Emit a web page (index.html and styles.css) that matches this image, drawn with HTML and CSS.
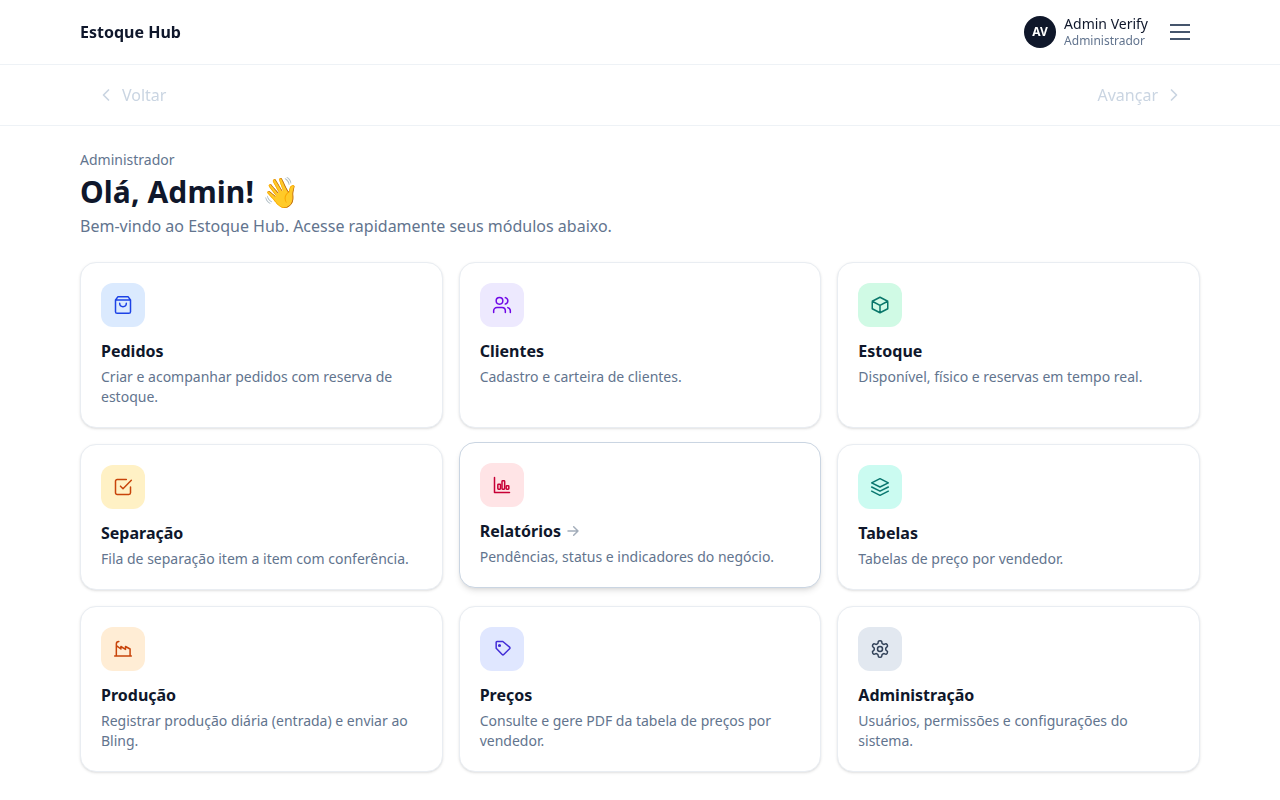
FILE: index.html
```html
<!DOCTYPE html>
<html lang="pt-BR">
<head>
<meta charset="utf-8">
<title>Estoque Hub</title>
<link rel="stylesheet" href="styles.css">
</head>
<body>
<header class="topbar">
  <div class="container topbar-row">
    <span class="brand">Estoque Hub</span>
    <div class="account">
      <span class="avatar">AV</span>
      <div class="who"><div class="name">Admin Verify</div><div class="role">Administrador</div></div>
      <button class="menu" aria-label="Menu"><svg class="menu-icon" viewBox="0 0 24 24"><path d="M2 5h20M2 12h20M2 19h20"/></svg></button>
    </div>
  </div>
</header>
<nav class="history">
  <div class="container history-row">
    <span class="step"><svg class="chevron" viewBox="0 0 20 20"><path d="M12.5 5l-5 5 5 5"/></svg>Voltar</span>
    <span class="step">Avançar<svg class="chevron" viewBox="0 0 20 20"><path d="M7.5 5l5 5-5 5"/></svg></span>
  </div>
</nav>
<main class="container main">
  <p class="eyebrow">Administrador</p>
  <h1 class="title">Olá, Admin! 👋</h1>
  <p class="lead">Bem-vindo ao Estoque Hub. Acesse rapidamente seus módulos abaixo.</p>
  <section class="grid">
    <article class="card">
      <div class="tile blue"><svg class="icon" viewBox="0 0 24 24"><path d="M6 2 3 6v14a2 2 0 0 0 2 2h14a2 2 0 0 0 2-2V6l-3-4zM3 6h18M16 10a4 4 0 0 1-8 0"/></svg></div>
      <h2 class="card-title">Pedidos</h2>
      <p class="card-text">Criar e acompanhar pedidos com reserva de estoque.</p>
    </article>
    <article class="card">
      <div class="tile violet"><svg class="icon" viewBox="0 0 24 24"><path d="M16 21v-2a4 4 0 0 0-4-4H6a4 4 0 0 0-4 4v2M22 21v-2a4 4 0 0 0-3-3.87M16 3.13a4 4 0 0 1 0 7.75"/><circle cx="9" cy="7" r="4"/></svg></div>
      <h2 class="card-title">Clientes</h2>
      <p class="card-text">Cadastro e carteira de clientes.</p>
    </article>
    <article class="card">
      <div class="tile emerald"><svg class="icon" viewBox="0 0 24 24"><path d="M21.3 7.5L12 2.7 2.7 7.5v9L12 21.3l9.3-4.8zM2.7 7.5l9.3 5 9.3-5M12 12.5v8.8"/></svg></div>
      <h2 class="card-title">Estoque</h2>
      <p class="card-text">Disponível, físico e reservas em tempo real.</p>
    </article>
    <article class="card">
      <div class="tile amber"><svg class="icon" viewBox="0 0 24 24"><path d="M9 11l3 3L22 4M21 12v7a2 2 0 0 1-2 2H5a2 2 0 0 1-2-2V5a2 2 0 0 1 2-2h11"/></svg></div>
      <h2 class="card-title">Separação</h2>
      <p class="card-text">Fila de separação item a item com conferência.</p>
    </article>
    <article class="card active">
      <div class="tile rose"><svg class="icon" viewBox="0 0 24 24"><path d="M3 3v18h18"/><rect x="7" y="11" width="3.2" height="6" rx=".8"/><rect x="12" y="7" width="3.2" height="10" rx=".8"/><rect x="17" y="13" width="3.2" height="4" rx=".8"/></svg></div>
      <h2 class="card-title">Relatórios<svg class="arrow" viewBox="0 0 24 24"><path d="M4.5 12h15M13 5.5l6.5 6.5-6.5 6.5"/></svg></h2>
      <p class="card-text">Pendências, status e indicadores do negócio.</p>
    </article>
    <article class="card">
      <div class="tile teal"><svg class="icon" viewBox="0 0 24 24"><path d="M12 2 2 7l10 5 10-5zM2 12l10 5 10-5M2 17l10 5 10-5"/></svg></div>
      <h2 class="card-title">Tabelas</h2>
      <p class="card-text">Tabelas de preço por vendedor.</p>
    </article>
    <article class="card">
      <div class="tile orange"><svg class="icon" viewBox="0 0 24 24"><path d="M2 20.4h20M4 20V6a3 3 0 0 1 3-3M4 8l5.5 4V9l5.5 3.5V9l5.5 3v8"/></svg></div>
      <h2 class="card-title">Produção</h2>
      <p class="card-text">Registrar produção diária (entrada) e enviar ao Bling.</p>
    </article>
    <article class="card">
      <div class="tile indigo"><svg class="icon" viewBox="0 0 24 24"><path d="M13 3H6a1 1 0 0 0-1 1v7.2l7.2 7.4a1.4 1.4 0 0 0 1.9 0l7-7a1.4 1.4 0 0 0 0-1.9z"/><circle cx="9" cy="7.8" r="1"/></svg></div>
      <h2 class="card-title">Preços</h2>
      <p class="card-text">Consulte e gere PDF da tabela de preços por vendedor.</p>
    </article>
    <article class="card">
      <div class="tile slate"><svg class="icon" viewBox="0 0 24 24"><path d="M12.22 2h-.44a2 2 0 0 0-2 2v.18a2 2 0 0 1-1 1.73l-.43.25a2 2 0 0 1-2 0l-.15-.08a2 2 0 0 0-2.73.73l-.22.38a2 2 0 0 0 .73 2.73l.15.1a2 2 0 0 1 1 1.72v.51a2 2 0 0 1-1 1.74l-.15.09a2 2 0 0 0-.73 2.73l.22.38a2 2 0 0 0 2.73.73l.15-.08a2 2 0 0 1 2 0l.43.25a2 2 0 0 1 1 1.73V20a2 2 0 0 0 2 2h.44a2 2 0 0 0 2-2v-.18a2 2 0 0 1 1-1.73l.43-.25a2 2 0 0 1 2 0l.15.08a2 2 0 0 0 2.73-.73l.22-.39a2 2 0 0 0-.73-2.73l-.15-.08a2 2 0 0 1-1-1.74v-.5a2 2 0 0 1 1-1.74l.15-.09a2 2 0 0 0 .73-2.73l-.22-.38a2 2 0 0 0-2.73-.73l-.15.08a2 2 0 0 1-2 0l-.43-.25a2 2 0 0 1-1-1.73V4a2 2 0 0 0-2-2z"/><circle cx="12" cy="12" r="3"/></svg></div>
      <h2 class="card-title">Administração</h2>
      <p class="card-text">Usuários, permissões e configurações do sistema.</p>
    </article>
  </section>
</main>
</body>
</html>
```
FILE: styles.css
```css
* { box-sizing: border-box; margin: 0; padding: 0; }
body { background: #fff; color: #0f172b; font: 16px/24px "Noto Sans", sans-serif; }
svg { display: block; fill: none; stroke: currentColor; stroke-linecap: round; stroke-linejoin: round; }
.container { width: 1120px; margin: 0 auto; }
.topbar, .history { border-bottom: 1px solid #eef2f6; background: rgba(255, 255, 255, .9); backdrop-filter: blur(8px); }
.topbar-row { height: 64px; display: flex; align-items: center; justify-content: space-between; }
.brand { font-weight: 700; }
.account { display: flex; align-items: center; gap: 8px; }
.avatar { width: 32px; height: 32px; border-radius: 50%; background: #0f172a; color: #fff; font-size: 12px; font-weight: 700; display: grid; place-items: center; }
.name { font-size: 14px; line-height: 17.5px; }
.role { font-size: 12px; line-height: 16px; color: #62748e; }
.who { margin-right: 4px; }
.menu { width: 40px; height: 40px; border: 0; background: none; color: #45556c; display: grid; place-items: center; }
.menu-icon { width: 24px; height: 24px; stroke-width: 2; stroke-linecap: butt; }
.history-row { height: 60px; padding: 0 16px; display: flex; align-items: center; justify-content: space-between; color: #cad5e2; }
.step { display: flex; align-items: center; gap: 6px; }
.chevron { width: 20px; height: 20px; stroke-width: 1.7; }
.main { padding: 24px 0; }
.eyebrow { font-size: 14px; line-height: 20px; color: #62748e; }
.title { margin-top: 4px; font-size: 30px; line-height: 36px; font-weight: 700; letter-spacing: .1px; }
.lead { margin-top: 4px; color: #62748e; }
.grid { margin-top: 24px; display: grid; grid-template-columns: repeat(3, 1fr); gap: 16px; }
.card { background: #fff; border: 1px solid #e9edf2; border-radius: 16px; padding: 20px; box-shadow: 0 1px 3px rgba(0, 0, 0, .1), 0 1px 2px -1px rgba(0, 0, 0, .1); }
.active { transform: translateY(-2px); border-color: #cad5e2; box-shadow: 0 4px 6px -1px rgba(0, 0, 0, .1), 0 2px 4px -2px rgba(0, 0, 0, .1); }
.tile { width: 44px; height: 44px; border-radius: 12px; display: grid; place-items: center; }
.icon { width: 20px; height: 20px; stroke-width: 1.8; }
.card-title { margin-top: 12px; font-size: 16px; line-height: 24px; font-weight: 700; display: flex; align-items: center; gap: 4px; }
.arrow { width: 16px; height: 16px; stroke-width: 2.2; color: #a3adba; }
.card-text { margin-top: 4px; font-size: 14px; line-height: 20px; color: #62748e; }
.blue { background: #dbeafe; color: #1d43e6; }
.violet { background: #ede9fe; color: #7008e7; }
.emerald { background: #d0fae5; color: #08766a; }
.amber { background: #fff1c5; color: #c8440a; }
.rose { background: #ffe4e6; color: #c70036; }
.teal { background: #cbfbf1; color: #08766e; }
.orange { background: #ffedd5; color: #c8440a; }
.indigo { background: #e0e7ff; color: #432dd7; }
.slate { background: #e2e8f0; color: #314158; }
```
